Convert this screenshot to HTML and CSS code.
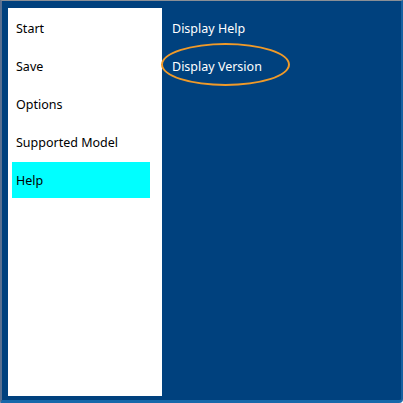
FILE: index.html
```html
<!DOCTYPE html>
<html>
<head>
<meta charset="utf-8">
<link rel="stylesheet" href="styles.css">
</head>
<body>
<div class="frame">
  <div class="sidebar">
    <div class="item">Start</div>
    <div class="item">Save</div>
    <div class="item">Options</div>
    <div class="item">Supported Model</div>
    <div class="item active">Help</div>
  </div>
  <div class="content">
    <div class="item">Display Help</div>
    <div class="item">Display Version<span class="ring"></span></div>
  </div>
</div>
</body>
</html>
```
FILE: styles.css
```css
html, body {
  margin: 0;
  padding: 0;
}
body {
  width: 403px;
  height: 403px;
  overflow: hidden;
  font-family: "Noto Sans", "Open Sans", sans-serif;
  font-size: 12.5px;
}
.frame {
  box-sizing: border-box;
  width: 403px;
  height: 403px;
  background: #00417e;
  border-top: 1px solid #8a8f96;
  border-left: 2px solid #5a7090;
  border-right: 2px solid #1660a0;
  border-bottom: 3px solid #1668aa;
  border-bottom-right-radius: 4px;
  display: flex;
  padding: 7px 0 4px 6px;
}
.sidebar {
  width: 154px;
  height: 388px;
  background: #ffffff;
  box-sizing: border-box;
  padding: 2px 0 0 4px;
  display: flex;
  flex-direction: column;
  gap: 2px;
}
.item {
  height: 36px;
  display: flex;
  align-items: center;
  padding-left: 4px;
  width: 138px;
  box-sizing: border-box;
  color: #000;
}
.item.active {
  background: #00ffff;
}
.content {
  flex: 1;
  padding: 2px 0 0 6px;
  display: flex;
  flex-direction: column;
  gap: 2px;
}
.content .item {
  color: #ffffff;
  position: relative;
  width: auto;
}
.ring {
  position: absolute;
  left: -7px;
  top: -5px;
  width: 125px;
  height: 39px;
  border: 2px solid #f09a28;
  border-radius: 50%;
}
```
